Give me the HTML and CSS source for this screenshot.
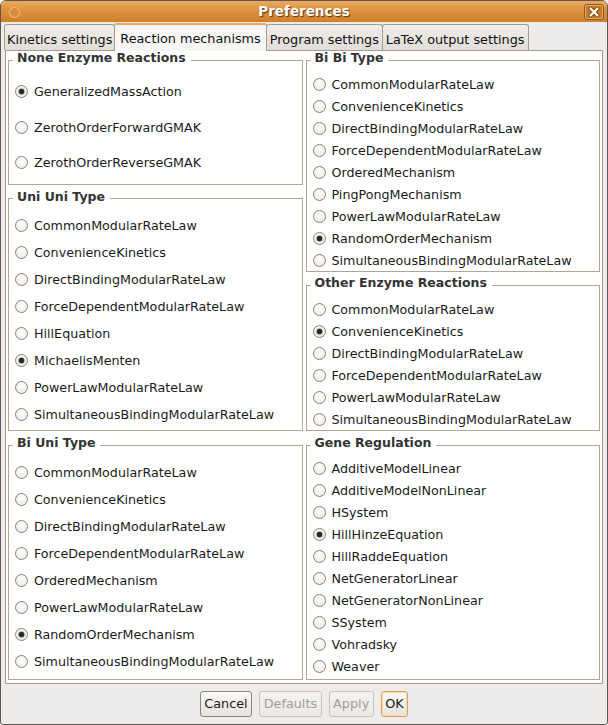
FILE: index.html
```html
<!DOCTYPE html>
<html>
<head>
<meta charset="utf-8">
<title>Preferences</title>
<link rel="stylesheet" href="styles.css">
</head>
<body>
<div class="window">
  <div class="titlebar">
    <div class="tb-side tb-left"><span class="menu-btn"></span></div>
    <div class="title">Preferences</div>
    <div class="tb-side tb-right">
      <span class="close-btn">
        <svg width="20" height="16" viewBox="0 0 20 16">
          <rect x="0.5" y="0.5" width="19" height="15" rx="2.5" fill="#c8792a" stroke="#8e5818"/>
          <rect x="1.5" y="1.5" width="17" height="13" rx="1.5" fill="none" stroke="#e6a964" stroke-width="1"/>
          <path d="M6.5 4.5 L13.5 11.5 M13.5 4.5 L6.5 11.5" stroke="#7a4a12" stroke-width="4" stroke-linecap="round"/>
          <path d="M6.5 4.5 L13.5 11.5 M13.5 4.5 L6.5 11.5" stroke="#ffffff" stroke-width="2.2" stroke-linecap="round"/>
        </svg>
      </span>
    </div>
  </div>
  <div class="client">
    <div class="tabs">
      <div class="tab tab-first">Kinetics settings</div>
      <div class="tab tab-active">Reaction mechanisms</div>
      <div class="tab">Program settings</div>
      <div class="tab">LaTeX output settings</div>
    </div>
    <div class="panel">
      <div class="stack">
        <fieldset class="group g-none">
          <legend>None Enzyme Reactions</legend>
          <div class="opts">
            <label class="opt"><span class="radio on"></span>GeneralizedMassAction</label>
            <label class="opt"><span class="radio"></span>ZerothOrderForwardGMAK</label>
            <label class="opt"><span class="radio"></span>ZerothOrderReverseGMAK</label>
          </div>
        </fieldset>
        <fieldset class="group g-uniuni">
          <legend>Uni Uni Type</legend>
          <div class="opts">
            <label class="opt"><span class="radio"></span>CommonModularRateLaw</label>
            <label class="opt"><span class="radio"></span>ConvenienceKinetics</label>
            <label class="opt"><span class="radio"></span>DirectBindingModularRateLaw</label>
            <label class="opt"><span class="radio"></span>ForceDependentModularRateLaw</label>
            <label class="opt"><span class="radio"></span>HillEquation</label>
            <label class="opt"><span class="radio on"></span>MichaelisMenten</label>
            <label class="opt"><span class="radio"></span>PowerLawModularRateLaw</label>
            <label class="opt"><span class="radio"></span>SimultaneousBindingModularRateLaw</label>
          </div>
        </fieldset>
      </div>
      <div class="stack stack-right">
        <fieldset class="group g-bibi">
          <legend>Bi Bi Type</legend>
          <div class="opts">
            <label class="opt"><span class="radio"></span>CommonModularRateLaw</label>
            <label class="opt"><span class="radio"></span>ConvenienceKinetics</label>
            <label class="opt"><span class="radio"></span>DirectBindingModularRateLaw</label>
            <label class="opt"><span class="radio"></span>ForceDependentModularRateLaw</label>
            <label class="opt"><span class="radio"></span>OrderedMechanism</label>
            <label class="opt"><span class="radio"></span>PingPongMechanism</label>
            <label class="opt"><span class="radio"></span>PowerLawModularRateLaw</label>
            <label class="opt"><span class="radio on"></span>RandomOrderMechanism</label>
            <label class="opt"><span class="radio"></span>SimultaneousBindingModularRateLaw</label>
          </div>
        </fieldset>
        <fieldset class="group g-other">
          <legend>Other Enzyme Reactions</legend>
          <div class="opts">
            <label class="opt"><span class="radio"></span>CommonModularRateLaw</label>
            <label class="opt"><span class="radio on"></span>ConvenienceKinetics</label>
            <label class="opt"><span class="radio"></span>DirectBindingModularRateLaw</label>
            <label class="opt"><span class="radio"></span>ForceDependentModularRateLaw</label>
            <label class="opt"><span class="radio"></span>PowerLawModularRateLaw</label>
            <label class="opt"><span class="radio"></span>SimultaneousBindingModularRateLaw</label>
          </div>
        </fieldset>
      </div>
      <fieldset class="group g-biuni">
        <legend>Bi Uni Type</legend>
        <div class="opts">
          <label class="opt"><span class="radio"></span>CommonModularRateLaw</label>
          <label class="opt"><span class="radio"></span>ConvenienceKinetics</label>
          <label class="opt"><span class="radio"></span>DirectBindingModularRateLaw</label>
          <label class="opt"><span class="radio"></span>ForceDependentModularRateLaw</label>
          <label class="opt"><span class="radio"></span>OrderedMechanism</label>
          <label class="opt"><span class="radio"></span>PowerLawModularRateLaw</label>
          <label class="opt"><span class="radio on"></span>RandomOrderMechanism</label>
          <label class="opt"><span class="radio"></span>SimultaneousBindingModularRateLaw</label>
        </div>
      </fieldset>
      <fieldset class="group g-gene">
        <legend>Gene Regulation</legend>
        <div class="opts">
          <label class="opt"><span class="radio"></span>AdditiveModelLinear</label>
          <label class="opt"><span class="radio"></span>AdditiveModelNonLinear</label>
          <label class="opt"><span class="radio"></span>HSystem</label>
          <label class="opt"><span class="radio on"></span>HillHinzeEquation</label>
          <label class="opt"><span class="radio"></span>HillRaddeEquation</label>
          <label class="opt"><span class="radio"></span>NetGeneratorLinear</label>
          <label class="opt"><span class="radio"></span>NetGeneratorNonLinear</label>
          <label class="opt"><span class="radio"></span>SSystem</label>
          <label class="opt"><span class="radio"></span>Vohradsky</label>
          <label class="opt"><span class="radio"></span>Weaver</label>
        </div>
      </fieldset>
    </div>
    <div class="buttonbar">
      <button class="btn">Cancel</button>
      <button class="btn" disabled>Defaults</button>
      <button class="btn" disabled>Apply</button>
      <button class="btn btn-default">OK</button>
    </div>
  </div>
</div>
</body>
</html>
```

FILE: styles.css
```css
html, body {
  margin: 0;
  padding: 0;
  background: #ffffff;
}
body {
  font-family: "DejaVu Sans", "Liberation Sans", sans-serif;
  font-size: 12.8px;
  color: #1a1a1a;
}
.window {
  width: 608px;
  height: 725px;
  box-sizing: border-box;
  border: 1px solid #5e574f;
  border-radius: 6px 6px 3px 3px;
  background: #edeceb;
  display: flex;
  flex-direction: column;
  overflow: hidden;
}
.titlebar {
  height: 21px;
  flex: none;
  display: flex;
  align-items: center;
  background: linear-gradient(#eba95e, #de923f 45%, #cf7f2b);
}
.tb-side {
  width: 34px;
  height: 21px;
  box-sizing: border-box;
  display: flex;
  align-items: center;
}
.tb-left {
  padding-left: 8px;
}
.tb-right {
  justify-content: flex-end;
  padding-right: 3px;
}
.menu-btn {
  width: 11px;
  height: 11px;
  box-sizing: border-box;
  border-radius: 50%;
  border: 1px solid #f2c48c;
  background: #d98c3a;
  margin-top: 1px;
}
.close-btn {
  display: flex;
  width: 20px;
  height: 16px;
}
.title {
  flex: 1;
  text-align: center;
  color: #ffffff;
  font-weight: bold;
  font-size: 13.5px;
  line-height: 21px;
  text-shadow: 1px 1px 1px #5c3408;
}
.client {
  flex: 1;
  display: flex;
  flex-direction: column;
  padding: 0 4px;
}
.tabs {
  display: flex;
  align-items: flex-end;
  height: 28px;
  flex: none;
}
.tab {
  height: 26px;
  box-sizing: border-box;
  border: 1px solid #a59c91;
  border-bottom: none;
  border-radius: 3px 3px 0 0;
  padding: 7px 3px 0;
  line-height: 16px;
  background: linear-gradient(#f0eeeb, #e1ddd8);
  white-space: nowrap;
  color: #111;
}
.tab + .tab {
  margin-left: -1px;
}
.tab-first {
  margin-left: -1px;
  padding-left: 2px;
  padding-right: 2px;
}
.tab-active {
  height: 28px;
  margin-bottom: -1px;
  padding: 5.5px 5px 0;
  border-top: 2px solid #eaa95f;
  background: #f7f6f4;
  position: relative;
  z-index: 1;
}
.panel {
  border: 1px solid #a59c91;
  background: #ffffff;
  padding: 0 2px 3.5px;
  display: grid;
  grid-template-columns: 1fr 1fr;
  column-gap: 3px;
  row-gap: 5px;
}
.stack {
  display: flex;
  flex-direction: column;
  gap: 5px;
}
.stack-right {
  gap: 4px;
}
.group {
  margin: 0;
  padding: 0;
  min-width: 0;
  border: 1px solid #b2a699;
}
.group legend {
  margin-left: 4px;
  padding: 0 5px 4px 4px;
  line-height: 14px;
  font-size: 12.5px;
  font-weight: bold;
  color: #333333;
}
.opts {
  display: grid;
  font-size: 12.7px;
}
.opt {
  display: flex;
  align-items: center;
  padding-left: 6px;
  white-space: nowrap;
}
.radio {
  width: 13px;
  height: 13px;
  box-sizing: border-box;
  border-radius: 50%;
  border: 1px solid #8a8176;
  background: radial-gradient(circle at 50% 35%, #ffffff, #e9e6e2);
  margin-right: 6px;
  flex: none;
  display: flex;
  align-items: center;
  justify-content: center;
}
.radio.on::after {
  content: "";
  width: 5px;
  height: 5px;
  border-radius: 50%;
  background: #262626;
  box-shadow: 0 0 1px 0.5px #555;
}
.g-none { padding: 5px 0 3px; }
.g-none .opt { height: 35.5px; }
.g-uniuni { padding: 4px 0 2px; }
.g-uniuni .opt { height: 27px; }
.g-biuni { padding: 5px 0 3.5px; }
.g-biuni .opt { height: 27px; }
.g-bibi { padding: 4px 0 0; }
.g-bibi .opt { height: 22px; }
.g-other { padding: 4px 0 0; }
.g-other .opt { height: 22px; }
.g-gene { padding: 3.5px 0 1px; }
.g-gene .opt { height: 22px; }
.buttonbar {
  display: flex;
  justify-content: center;
  gap: 7px;
  padding-top: 7px;
}
.btn {
  height: 26px;
  box-sizing: border-box;
  padding: 0 3.5px;
  border: 1px solid #8c8479;
  border-radius: 3px;
  background: linear-gradient(#fbfaf9, #e6e2dd);
  font: inherit;
  line-height: 24px;
  color: #1a1a1a;
}
.btn:disabled {
  border-color: #c9c2b9;
  background: linear-gradient(#f5f4f2, #ebe8e4);
  color: #a39e97;
}
.btn-default {
  border-color: #e09f52;
  box-shadow: inset 0 0 0 1px #f8ddb9;
}
```
